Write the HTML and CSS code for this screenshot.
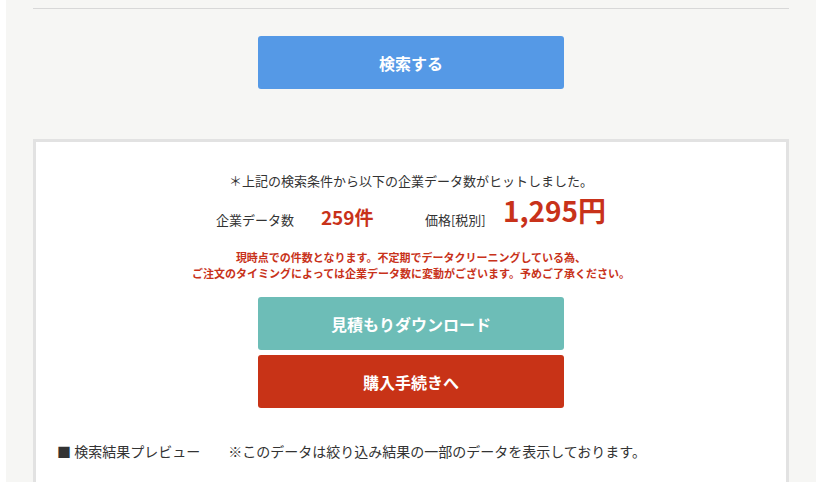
FILE: index.html
```html
<!DOCTYPE html>
<html lang="ja">
<head>
<meta charset="utf-8">
<title>検索結果</title>
<link rel="stylesheet" href="styles.css">
</head>
<body>
<div class="page">
  <div class="rule"></div>
  <div class="search-wrap">
    <button class="btn btn-search">検索する</button>
  </div>
  <div class="card">
    <p class="hit">＊上記の検索条件から以下の企業データ数がヒットしました。</p>
    <div class="summary">
      <span class="label">企業データ数</span>
      <span class="count">259件</span>
      <span class="label">価格[税別]</span>
      <span class="price">1,295円</span>
    </div>
    <p class="notice">現時点での件数となります。不定期でデータクリーニングしている為、<br>ご注文のタイミングによっては企業データ数に変動がございます。予めご了承ください。</p>
    <button class="btn btn-estimate">見積もりダウンロード</button>
    <button class="btn btn-buy">購入手続きへ</button>
    <p class="preview">■ 検索結果プレビュー　　※このデータは絞り込み結果の一部のデータを表示しております。</p>
  </div>
</div>
</body>
</html>
```
FILE: styles.css
```css
html, body {
  margin: 0;
  padding: 0;
  background: #ffffff;
  font-family: "Noto Sans CJK JP", "Noto Sans", sans-serif;
  color: #333333;
}
.page {
  margin: 0 14px 0 6px;
  background: #f6f6f4;
  padding: 8px 27px 0;
  min-height: 600px;
}
.rule {
  height: 1px;
  background: #d8d8d8;
}
.search-wrap {
  display: flex;
  justify-content: center;
  padding-top: 27px;
  padding-bottom: 50px;
}
.btn {
  display: flex;
  align-items: center;
  justify-content: center;
  width: 306px;
  height: 53px;
  border: none;
  border-radius: 3px;
  color: #ffffff;
  font-family: "Noto Sans CJK JP", sans-serif;
  font-weight: bold;
  font-size: 16px;
  padding: 0;
}
.btn-search {
  background: #5599e6;
}
.card {
  background: #ffffff;
  border: 3px solid #e2e2e2;
  display: flex;
  flex-direction: column;
  align-items: center;
  padding-top: 29px;
  min-height: 400px;
}
.hit {
  margin: 0;
  font-size: 13px;
  line-height: 20px;
}
.summary {
  display: flex;
  align-items: flex-start;
}
.label {
  width: 78px;
  font-size: 13px;
  line-height: 20px;
  margin-top: 19px;
  white-space: nowrap;
}
.count {
  width: 104px;
  margin-left: 27px;
  margin-top: 14px;
  color: #c8321a;
  font-weight: bold;
  font-size: 19px;
  line-height: 24px;
}
.price {
  margin-top: 1px;
  color: #c8321a;
  font-weight: bold;
  font-size: 28px;
  line-height: 36px;
}
.notice {
  margin: 19px 0 0;
  color: #c8321a;
  font-size: 11px;
  line-height: 16px;
  font-weight: bold;
  text-align: center;
}
.btn-estimate {
  margin-top: 16px;
  background: #6dbdb7;
}
.btn-buy {
  margin-top: 5px;
  background: #c83317;
}
.preview {
  align-self: flex-start;
  margin: 33px 0 0 21px;
  font-size: 14px;
  line-height: 20px;
}
```
